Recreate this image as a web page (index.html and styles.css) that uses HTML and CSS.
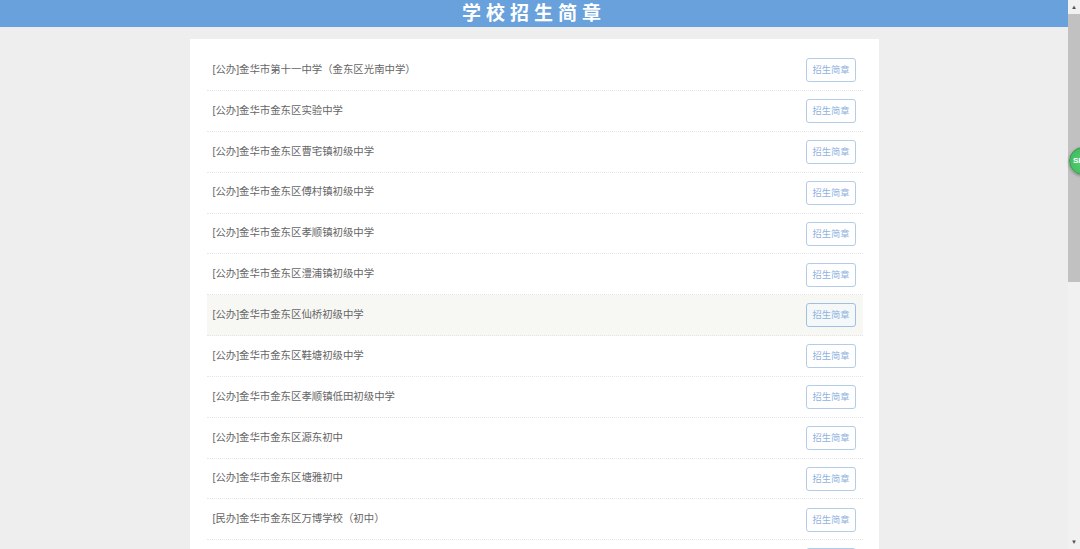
FILE: index.html
```html
<!DOCTYPE html>
<html lang="zh-CN">
<head>
  <meta charset="utf-8">
  <meta name="viewport" content="width=device-width, initial-scale=1">
  <title>学校招生简章</title>
  <link rel="stylesheet" href="styles.css">
</head>
<body>
  <div class="page">
    <header class="header">
      <h1 class="page-title">学校招生简章</h1>
    </header>

    <main class="main-content">
      <ul class="school-list">
        <li class="school-row"><span class="school-name">[公办]金华市第十一中学（金东区光南中学）</span><a class="brochure-button">招生简章</a></li>
        <li class="school-row"><span class="school-name">[公办]金华市金东区实验中学</span><a class="brochure-button">招生简章</a></li>
        <li class="school-row"><span class="school-name">[公办]金华市金东区曹宅镇初级中学</span><a class="brochure-button">招生简章</a></li>
        <li class="school-row"><span class="school-name">[公办]金华市金东区傅村镇初级中学</span><a class="brochure-button">招生简章</a></li>
        <li class="school-row"><span class="school-name">[公办]金华市金东区孝顺镇初级中学</span><a class="brochure-button">招生简章</a></li>
        <li class="school-row"><span class="school-name">[公办]金华市金东区澧浦镇初级中学</span><a class="brochure-button">招生简章</a></li>
        <li class="school-row school-row-hover"><span class="school-name">[公办]金华市金东区仙桥初级中学</span><a class="brochure-button">招生简章</a></li>
        <li class="school-row"><span class="school-name">[公办]金华市金东区鞋塘初级中学</span><a class="brochure-button">招生简章</a></li>
        <li class="school-row"><span class="school-name">[公办]金华市金东区孝顺镇低田初级中学</span><a class="brochure-button">招生简章</a></li>
        <li class="school-row"><span class="school-name">[公办]金华市金东区源东初中</span><a class="brochure-button">招生简章</a></li>
        <li class="school-row"><span class="school-name">[公办]金华市金东区塘雅初中</span><a class="brochure-button">招生简章</a></li>
        <li class="school-row"><span class="school-name">[民办]金华市金东区万博学校（初中）</span><a class="brochure-button">招生简章</a></li>
        <li class="school-row"><span class="school-name"></span><a class="brochure-button">招生简章</a></li>
      </ul>
    </main>
  </div>

  <div class="scrollbar">
    <div class="scroll-arrow">▲</div>
    <div class="scroll-thumb"></div>
    <div class="scroll-rest"></div>
    <div class="scroll-arrow">▼</div>
  </div>

  <div class="float-badge">SB</div>
</body>
</html>
```

FILE: styles.css
```css
* {
  margin: 0;
  padding: 0;
  box-sizing: border-box;
}

body {
  font-family: "Liberation Sans", "Noto Sans CJK SC", sans-serif;
  background-color: #EEEEEE;
  height: 549px;
  overflow: hidden;
  display: flex;
}

.page {
  flex: 1;
  min-width: 0;
}

.header {
  height: 27px;
  background-color: #69A1DD;
  display: flex;
  justify-content: center;
  align-items: center;
}

.page-title {
  color: #FFFFFF;
  font-size: 19px;
  font-weight: 700;
  letter-spacing: 5px;
  line-height: 24px;
}

.main-content {
  width: 689px;
  margin: 12px 0 0 190px;
  padding: 11.2px 16px 0 17px;
  background-color: #FFFFFF;
}

.school-list {
  list-style: none;
}

.school-row {
  height: 40.85px;
  padding: 0 7px 0 5.5px;
  display: flex;
  justify-content: space-between;
  align-items: center;
  border-bottom: 1px dotted #E6E6E6;
}

.school-row-hover {
  background-color: #F7F8F4;
}

.school-name {
  color: #666666;
  font-size: 10.4px;
  line-height: 16px;
  margin-bottom: 0.4px;
}

.brochure-button {
  width: 50px;
  height: 24px;
  margin-top: 0.4px;
  border: 1px solid #B3CDE9;
  border-radius: 3px;
  color: #8FB3E0;
  font-size: 9.25px;
  line-height: 22px;
  text-align: center;
  background-color: #FFFFFF;
}

.school-row-hover .brochure-button {
  background-color: #F5F8F9;
  border-color: #A0C0E3;
}

.scrollbar {
  width: 12px;
  flex: none;
  background-color: #F1F1F1;
  display: flex;
  flex-direction: column;
  align-items: stretch;
}

.scroll-arrow {
  height: 14px;
  color: #505050;
  font-size: 6px;
  line-height: 14px;
  text-align: center;
}

.scroll-thumb {
  height: 268px;
  background-color: #C1C1C1;
}

.scroll-rest {
  flex: 1;
}

.float-badge {
  position: absolute;
  left: 1069px;
  top: 147px;
  width: 28px;
  height: 28px;
  border-radius: 50%;
  border: 1px solid #3C9A52;
  background: radial-gradient(circle at 50% 55%, #58CF72, #3BB45A);
  box-shadow: 0 1px 3px rgba(0, 0, 0, 0.35);
  color: #FFFFFF;
  font-size: 8px;
  font-weight: 700;
  line-height: 26px;
  padding-left: 3px;
}
```
